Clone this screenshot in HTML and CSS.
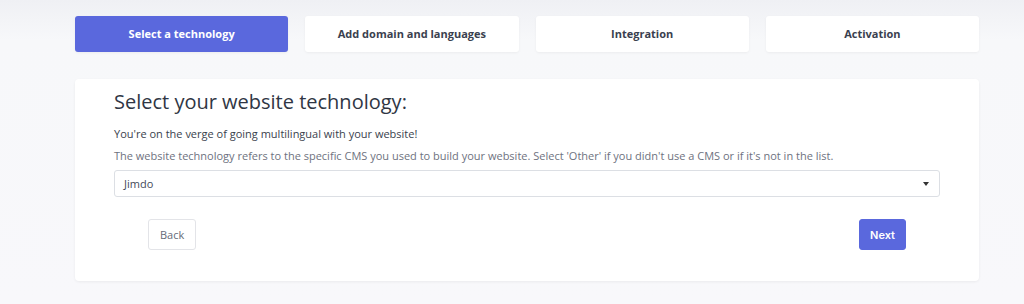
FILE: index.html
```html
<!DOCTYPE html>
<html lang="en">
<head>
    <meta charset="UTF-8">
    <meta name="viewport" content="width=device-width, initial-scale=1.0">
    <title>Setup - Select a technology</title>
    <link rel="stylesheet" href="styles.css">
</head>
<body>
    <div class="wizard">
        <nav class="steps">
            <div class="step active">Select a technology</div>
            <div class="step">Add domain and languages</div>
            <div class="step">Integration</div>
            <div class="step">Activation</div>
        </nav>

        <div class="card">
            <h2>Select your website technology:</h2>
            <p class="lead">You're on the verge of going multilingual with your website!</p>
            <p class="hint">The website technology refers to the specific CMS you used to build your website. Select 'Other' if you didn't use a CMS or if it's not in the list.</p>

            <div class="select">
                <span class="select-value">Jimdo</span>
                <span class="caret"></span>
            </div>

            <div class="actions">
                <button class="btn btn-back">Back</button>
                <button class="btn btn-next">Next</button>
            </div>
        </div>
    </div>
</body>
</html>
```

FILE: styles.css
```css
body {
    margin: 0;
    font-family: 'Open Sans', 'Noto Sans', sans-serif;
    background: linear-gradient(180deg, #eff0f4 0%, #f7f8fa 40px, #f8f8fb 100%);
    min-height: 304px;
    color: #3d4352;
}

.wizard {
    width: 904px;
    margin-left: 75px;
    padding-top: 16px;
}

.steps {
    display: grid;
    grid-template-columns: repeat(4, 1fr);
    gap: 17px;
}

.step {
    height: 36px;
    box-sizing: border-box;
    padding-bottom: 2px;
    display: flex;
    align-items: center;
    justify-content: center;
    background: #fff;
    border-radius: 3px;
    box-shadow: 0 1px 3px rgba(0, 0, 0, 0.05);
    font-size: 11px;
    font-weight: 700;
    color: #3a3f4f;
}

.step.active {
    background: #5a68dd;
    color: #fff;
}

.card {
    margin-top: 27px;
    background: #fff;
    border-radius: 4px;
    box-shadow: 0 1px 3px rgba(0, 0, 0, 0.06);
    padding: 10px 39px 31px;
}

.card h2 {
    margin: 0;
    font-size: 20px;
    line-height: 26px;
    font-weight: 500;
    color: #2f3644;
}

.lead,
.hint {
    margin: 0;
    font-size: 11px;
    line-height: 18px;
}

.lead {
    margin-top: 10px;
    color: #3a3f4d;
}

.hint {
    margin-top: 4px;
    color: #6e7280;
}

.select {
    margin-top: 5px;
    height: 27px;
    box-sizing: border-box;
    border: 1px solid #dcdfe4;
    border-radius: 3px;
    padding: 0 10px 0 9px;
    display: flex;
    align-items: center;
    justify-content: space-between;
    font-size: 11px;
    color: #444a58;
}

.caret {
    width: 0;
    height: 0;
    border-left: 3.5px solid transparent;
    border-right: 3.5px solid transparent;
    border-top: 4px solid #333;
}

.actions {
    margin-top: 22px;
    padding: 0 34px;
    display: flex;
    justify-content: space-between;
}

.btn {
    height: 31px;
    padding: 0 11px;
    border-radius: 3px;
    font-size: 11px;
    font-family: 'Open Sans', 'Noto Sans', sans-serif;
    cursor: pointer;
}

.btn-back {
    background: #fff;
    border: 1px solid #e3e4e8;
    color: #666b78;
}

.btn-next {
    padding: 0 10px;
    background: #5a68dd;
    border: 1px solid #5a68dd;
    color: #fff;
    font-weight: 600;
    font-family: Inter, sans-serif;
}
```
